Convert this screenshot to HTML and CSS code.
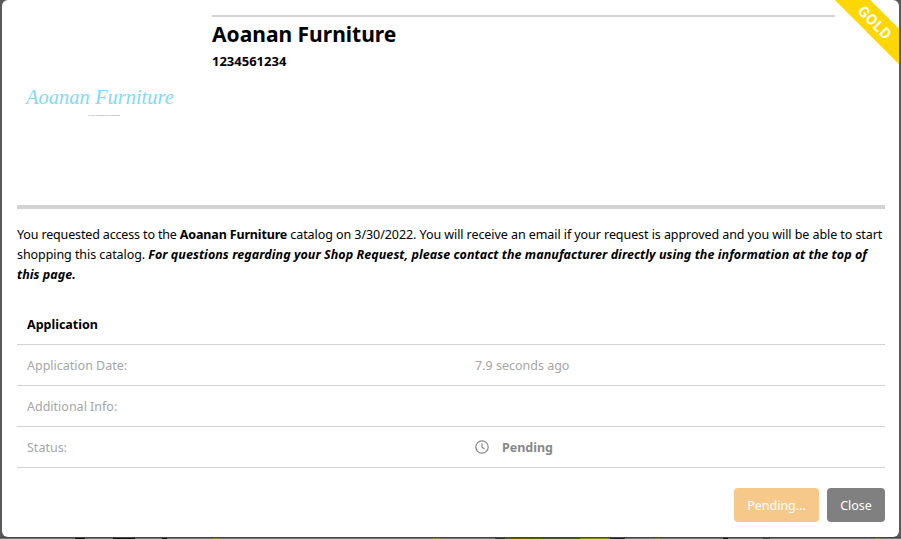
FILE: index.html
```html
<!DOCTYPE html>
<html lang="en">
<head>
<meta charset="utf-8">
<title>Aoanan Furniture</title>
<link rel="stylesheet" href="styles.css">
</head>
<body>
<div class="modal">
  <div class="ribbon">GOLD</div>
  <header class="head">
    <div class="logo">
      <div class="logo-name">Aoanan Furniture</div>
      <div class="logo-sub">MANUFACTURER OF FURNITURE</div>
    </div>
    <div class="info">
      <h1 class="title">Aoanan Furniture</h1>
      <div class="phone">1234561234</div>
    </div>
  </header>
  <div class="rule"></div>
  <p class="msg">You requested access to the <b>Aoanan Furniture</b> <span class="tail">catalog on 3/30/2022. You will receive an email if your request is approved and you will be able to start shopping this catalog.</span> <b class="note">For questions regarding your Shop Request, please contact the manufacturer directly using the information at the top of this page.</b></p>
  <div class="table">
    <div class="row row-head">Application</div>
    <div class="row"><span class="cell">Application Date:</span><span class="cell">7.9 seconds ago</span></div>
    <div class="row"><span class="cell">Additional Info:</span><span class="cell"></span></div>
    <div class="row"><span class="cell">Status:</span><span class="cell status">
      <svg class="clock" viewBox="0 0 14 14" width="14" height="14" aria-hidden="true"><circle cx="7" cy="7" r="6.2" fill="none" stroke="currentColor" stroke-width="1.2"/><path d="M7 3.2V7.3L9.6 9" fill="none" stroke="currentColor" stroke-width="1.2"/></svg>
      <b>Pending</b></span></div>
  </div>
  <div class="actions">
    <button class="btn btn-pending" type="button">Pending...</button>
    <button class="btn btn-close" type="button">Close</button>
  </div>
</div>
<div class="backdrop-strip"></div>
</body>
</html>
```
FILE: styles.css
```css
* { box-sizing: border-box; }
html, body { margin: 0; height: 539px; overflow: hidden; }
body { background: #5a5a5a; font-family: "Noto Sans", "Open Sans", sans-serif; color: #000; }
.modal {
  position: relative;
  width: 897px;
  height: 537px;
  margin-left: 2px;
  background: #fff;
  border-radius: 6px;
  overflow: hidden;
  padding: 0 14px 0 15px;
}
.backdrop-strip {
  height: 2px;
  border-top: 1px solid #444;
  background: linear-gradient(90deg,
    #777 0 75px, #111 75px 85px, #777 85px 113px, #111 113px 135px, #777 135px 162px, #111 162px 167px,
    #777 167px 213px, #a08a10 213px 220px, #777 220px 433px, #a08a10 433px 440px, #777 440px 495px,
    #333 495px 505px, #6a5a10 505px 540px, #3d5a1a 540px 580px, #8a8a10 580px 610px, #222 610px 625px,
    #777 625px 655px, #a08a10 655px 660px, #777 660px 723px, #111 723px 728px, #777 728px 763px,
    #444 763px 770px, #777 770px 875px, #a08a10 875px 880px, #777 880px);
}
.ribbon {
  position: absolute;
  top: 10px;
  right: -36px;
  width: 120px;
  height: 25px;
  background: #ffd700;
  color: #fff;
  font: 700 15px/26px Roboto, sans-serif;
  letter-spacing: .6px;
  text-align: center;
  transform: rotate(45deg);
}
.head { display: flex; height: 205px; }
.logo { width: 195px; padding: 86px 0 0 9px; flex: none; }
.logo-name {
  font: italic 400 20.5px/22px "Liberation Serif", serif;
  color: #84d8f8;
  white-space: nowrap;
}
.logo-sub {
  font: 400 2px/4px "Liberation Sans", sans-serif;
  color: #777;
  text-align: center;
  width: 156px;
  margin-top: 5px;
}
.info { width: 623px; border-top: 2px solid #d3d3d3; margin-top: 15px; height: max-content; }
.title { margin: 1px 0 0; font-size: 21px; line-height: 32px; font-weight: 700; }
.phone { font-size: 13px; line-height: 18px; font-weight: 700; margin-top: 2px; }
.rule { height: 4px; background: #d3d3d3; width: 868px; }
.msg { margin: 16px 0 0; width: 868px; font-size: 12.5px; line-height: 20px; letter-spacing: -.15px; }
.tail { letter-spacing: -.07px; }
.note { font-style: italic; letter-spacing: .05px; }
.table { margin-top: 20px; width: 868px; }
.row { display: flex; align-items: center; height: 41px; padding-left: 10px; font-size: 12.5px; color: #a6a6a6; border-bottom: 1px solid #d3d3d3; }
.row-head { color: #000; font-weight: 700; height: 40px; }
.cell { flex: none; width: 448px; }
.status { display: flex; align-items: center; gap: 13px; color: #888; }
.clock { flex: none; }
.actions { display: flex; justify-content: flex-end; gap: 8px; width: 868px; margin-top: 20px; }
.btn { height: 34px; border: 0; border-radius: 4px; color: #fff; font: 400 12.5px "Noto Sans", sans-serif; padding: 0; }
.btn-pending { width: 85px; background: #f6c98a; }
.btn-close { width: 58px; background: #808080; }
```
